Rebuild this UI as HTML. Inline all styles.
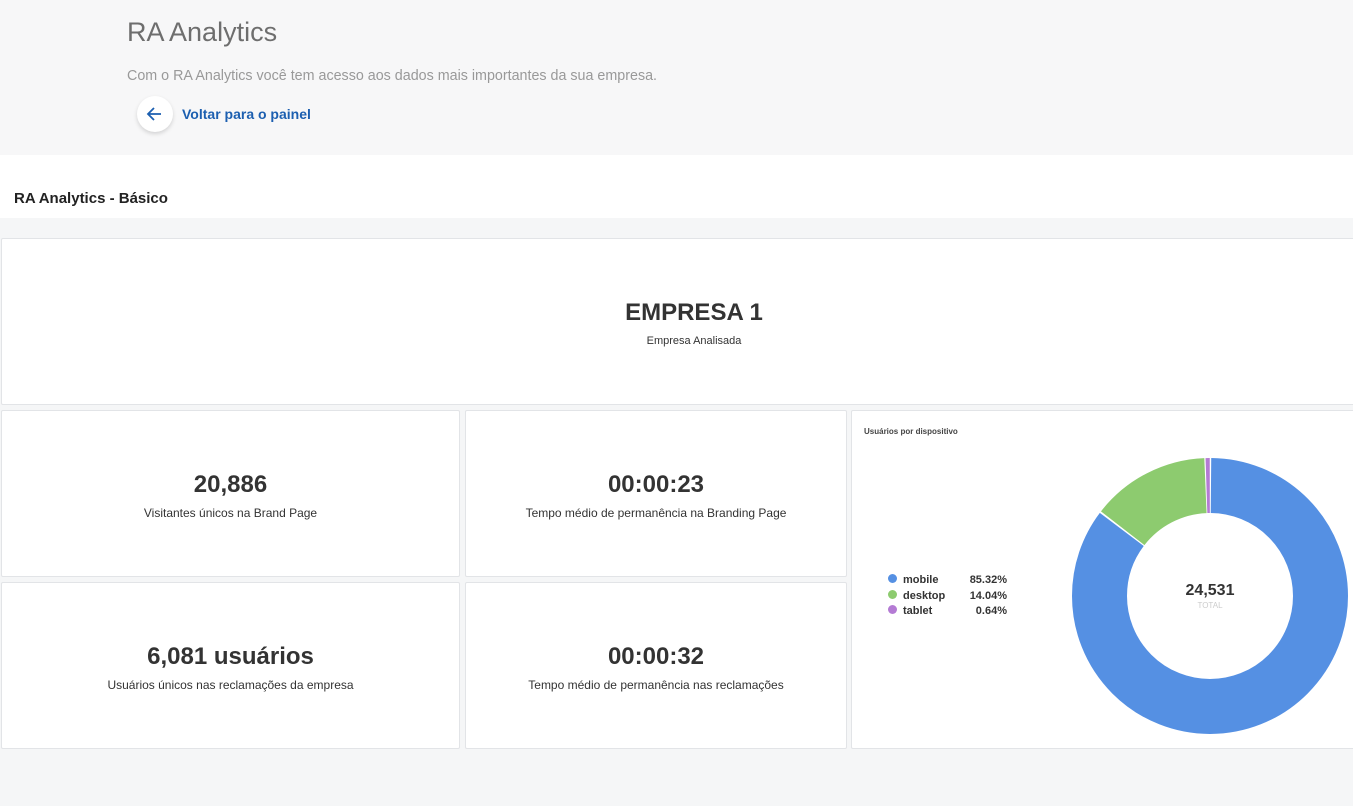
<!DOCTYPE html>
<html><head><meta charset="utf-8"><style>
*{margin:0;padding:0;box-sizing:border-box}
body{width:1353px;height:806px;background:#f5f6f7;font-family:"Liberation Sans",sans-serif;color:#333;position:relative;overflow:hidden}
.hdr{position:absolute;left:0;top:0;width:1353px;height:155px;background:#f7f7f8}
.hdr h1{position:absolute;left:127px;top:17px;font-size:27px;font-weight:normal;color:#6e6e6e}
.hdr p{position:absolute;left:127px;top:68px;font-size:14.3px;color:#999}
.btn{position:absolute;left:137px;top:96px;width:36px;height:36px;border-radius:50%;background:#fff;box-shadow:0 2px 4px rgba(0,0,0,.15)}
.back{position:absolute;left:182px;top:106px;font-size:14px;font-weight:bold;color:#1c5fb0}
.band{position:absolute;left:0;top:155px;width:1353px;height:63px;background:#fff}
.band span{position:absolute;left:14px;top:35px;font-size:15px;font-weight:bold;color:#222}
.card{position:absolute;background:#fff;border:1px solid #e2e4e7;border-radius:2px;text-align:center}
.big{position:absolute;left:0;right:0;font-size:24px;font-weight:bold;color:#333}
.sub{position:absolute;left:0;right:0;font-size:12px;color:#333}
</style></head><body>
<div class="hdr">
<h1>RA Analytics</h1>
<p>Com o RA Analytics você tem acesso aos dados mais importantes da sua empresa.</p>
<div class="btn"><svg width="36" height="36" viewBox="0 0 36 36"><path d="M24 18H11M17 12l-6 6 6 6" fill="none" stroke="#1c5fb0" stroke-width="1.8"/></svg></div>
<div class="back">Voltar para o painel</div>
</div>
<div class="band"><span>RA Analytics - Básico</span></div>

<div class="card" style="left:1px;top:238px;width:1386px;height:167px">
<div class="big" style="top:60px">EMPRESA 1</div>
<div class="sub" style="top:96px;font-size:11px">Empresa Analisada</div>
</div>

<div class="card" style="left:1px;top:410px;width:459px;height:167px">
<div class="big" style="top:60px">20,886</div><div class="sub" style="top:95px">Visitantes únicos na Brand Page</div></div>
<div class="card" style="left:465px;top:410px;width:382px;height:167px">
<div class="big" style="top:60px">00:00:23</div><div class="sub" style="top:95px">Tempo médio de permanência na Branding Page</div></div>
<div class="card" style="left:1px;top:582px;width:459px;height:167px">
<div class="big" style="top:60px">6,081 usuários</div><div class="sub" style="top:95px">Usuários únicos nas reclamações da empresa</div></div>
<div class="card" style="left:465px;top:582px;width:382px;height:167px">
<div class="big" style="top:60px">00:00:32</div><div class="sub" style="top:95px">Tempo médio de permanência nas reclamações</div></div>

<div class="card" style="left:851px;top:410px;width:506px;height:339px;text-align:left">
<div style="position:absolute;left:12px;top:16px;font-size:8px;font-weight:bold;color:#444">Usuários por dispositivo</div>
<div style="position:absolute;left:36px;top:162px;font-size:11px;font-weight:bold;color:#333;line-height:15.5px">
<div><span style="display:inline-block;width:9px;height:9px;border-radius:50%;background:#5590e3;margin-right:6px"></span><span style="display:inline-block;width:62px">mobile</span><span style="display:inline-block;width:42px;text-align:right">85.32%</span></div>
<div><span style="display:inline-block;width:9px;height:9px;border-radius:50%;background:#8dcb6f;margin-right:6px"></span><span style="display:inline-block;width:62px">desktop</span><span style="display:inline-block;width:42px;text-align:right">14.04%</span></div>
<div><span style="display:inline-block;width:9px;height:9px;border-radius:50%;background:#b47bd4;margin-right:6px"></span><span style="display:inline-block;width:62px">tablet</span><span style="display:inline-block;width:42px;text-align:right">0.64%</span></div>
</div>
<svg style="position:absolute;left:0;top:0" width="506" height="339">
<g transform="translate(358,185) rotate(-90)">
<circle r="110.5" fill="none" stroke="#5590e3" stroke-width="55" stroke-dasharray="590.9 1000" stroke-dashoffset="-1"/>
<circle r="110.5" fill="none" stroke="#8dcb6f" stroke-width="55" stroke-dasharray="96 1000" stroke-dashoffset="-593.4"/>
<circle r="110.5" fill="none" stroke="#b47bd4" stroke-width="55" stroke-dasharray="3.4 1000" stroke-dashoffset="-690.4"/>
</g>
<text x="358" y="184" text-anchor="middle" font-family="Liberation Sans" font-size="16" font-weight="bold" fill="#333">24,531</text>
<text x="358" y="197" text-anchor="middle" font-family="Liberation Sans" font-size="8" fill="#ccc">TOTAL</text>
</svg>
</div>
</body></html>
